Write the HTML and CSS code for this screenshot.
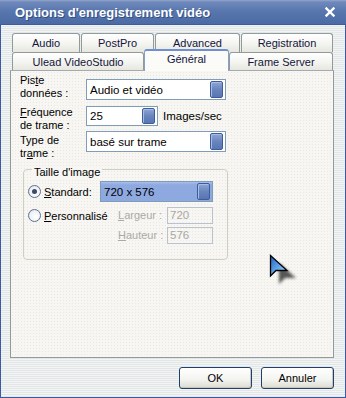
FILE: index.html
```html
<!DOCTYPE html>
<html lang="fr">
<head>
    <meta charset="UTF-8">
    <meta name="viewport" content="width=device-width, initial-scale=1.0">
    <title>Options d'enregistrement vidéo</title>
    <link rel="stylesheet" href="styles.css">
</head>
<body>
    <div class="window">
        <div class="titlebar">
            <span class="title">Options d'enregistrement vidéo</span>
            <svg class="close" width="10" height="10" viewBox="0 0 10 10">
                <path d="M1.5 1.5 L8.5 8.5 M8.5 1.5 L1.5 8.5" stroke="#fff" stroke-width="2.4" stroke-linecap="square"/>
            </svg>
        </div>
        <div class="body">
            <div class="tabrow tabrow-back">
                <div class="tab tab-audio">Audio</div>
                <div class="tab tab-postpro">PostPro</div>
                <div class="tab tab-advanced">Advanced</div>
                <div class="tab tab-registration">Registration</div>
            </div>
            <div class="tabrow tabrow-front">
                <div class="tab tab-ulead">Ulead VideoStudio</div>
                <div class="tab tab-general active">Général</div>
                <div class="tab tab-frame">Frame Server</div>
            </div>
            <div class="panel">
                <div class="field field-piste">
                    <div class="field-label">Pis<u>t</u>e<br>données :</div>
                    <div class="combo combo-wide"><span class="combo-text">Audio et vidéo</span><span class="drop"></span></div>
                </div>
                <div class="field field-freq">
                    <div class="field-label"><u>F</u>réquence<br>de trame :</div>
                    <div class="combo combo-short"><span class="combo-text">25</span><span class="drop"></span></div>
                    <span class="unit">Images/sec</span>
                </div>
                <div class="field field-type">
                    <div class="field-label">Type de<br>tr<u>a</u>me :</div>
                    <div class="combo combo-wide"><span class="combo-text">basé sur trame</span><span class="drop"></span></div>
                </div>

                <div class="group">
                    <div class="group-title">Taille d'image</div>
                    <div class="size-grid">
                        <div class="radio-item radio-std"><span class="radio checked"></span><span class="radio-text"><u>S</u>tandard:</span></div>
                        <div class="combo combo-size"><span class="combo-text">720 x 576</span><span class="drop"></span></div>

                        <div class="radio-item radio-custom"><span class="radio"></span><span class="radio-text"><u>P</u>ersonnalisé</span></div>
                        <span class="dim-label dim-w"><u>L</u>argeur :</span>
                        <span class="dim-box dim-w">720</span>

                        <span class="dim-label dim-h"><u>H</u>auteur :</span>
                        <span class="dim-box dim-h">576</span>
                    </div>
                </div>

                <svg class="cursor" width="34" height="36" viewBox="0 0 34 36">
                    <defs>
                        <filter id="blur" x="-50%" y="-50%" width="200%" height="200%">
                            <feGaussianBlur stdDeviation="1.8"/>
                        </filter>
                        <linearGradient id="arrowFill" x1="0" y1="0" x2="1" y2="1">
                            <stop offset="0" stop-color="#1d5fc4"/>
                            <stop offset="0.6" stop-color="#6fb0f0"/>
                            <stop offset="1" stop-color="#c4e4ff"/>
                        </linearGradient>
                    </defs>
                    <path d="M10 9 L10 30 L16 24 L27 24 Z" fill="#222" opacity="0.75" filter="url(#blur)"/>
                    <path d="M1.5 1.5 L1.5 22 L7 16.5 L18 16.5 Z" fill="url(#arrowFill)" stroke="#000" stroke-width="1.3" stroke-linejoin="miter"/>
                </svg>
            </div>
            <div class="buttons">
                <button class="btn">OK</button>
                <button class="btn">Annuler</button>
            </div>
        </div>
    </div>
</body>
</html>
```

FILE: styles.css
```css
html, body {
    margin: 0;
    padding: 0;
}
body {
    font-family: "Liberation Sans", Arial, sans-serif;
    font-size: 11px;
    color: #000;
    background: #fff;
}
u {
    text-decoration: underline;
    text-underline-offset: 1px;
}
.window {
    width: 346px;
    height: 398px;
    box-sizing: border-box;
    border: 1px solid #3c5ba6;
    border-top: none;
    display: flex;
    flex-direction: column;
}
.titlebar {
    height: 24px;
    margin: 0 -1px;
    display: flex;
    align-items: center;
    justify-content: space-between;
    padding: 0 11px 0 15px;
    background: linear-gradient(to bottom, #93a7cc 0, #7089bb 2px, #5877ae 45%, #4c6aa4 100%);
    border-bottom: 1px solid #3c5ba6;
}
.title {
    color: #fff;
    font-weight: bold;
    font-size: 13px;
    text-shadow: 1px 1px 0 rgba(20, 40, 90, 0.5);
}
.close {
    display: block;
}
.body {
    flex: 1;
    padding: 8px 11px 0 9px;
    background: repeating-linear-gradient(to bottom, #f4f4f0 0, #f4f4f0 1px, #e1e6ea 1px, #e1e6ea 2px);
    display: flex;
    flex-direction: column;
}
.tabrow {
    display: flex;
    margin-left: 2px;
}
.tabrow-back {
    height: 19px;
}
.tabrow-front {
    height: 18px;
}
.tab {
    box-sizing: border-box;
    border: 1px solid #919b9c;
    border-bottom: none;
    border-radius: 3px 3px 0 0;
    background: linear-gradient(to bottom, #ffffff 0, #f4f4f0 55%, #e7e7e0 100%);
    color: #14143c;
    text-align: center;
    padding-top: 3px;
    line-height: 13px;
    margin-right: 1px;
}
.tab-audio { width: 68px; }
.tab-postpro { width: 73px; }
.tab-advanced { width: 85px; }
.tab-registration { width: 92px; margin-right: 0; }
.tab-ulead { width: 132px; margin-right: 0; }
.tab-general { width: 85px; margin-right: 0; }
.tab-frame { width: 104px; margin-right: 0; }
.tab.active {
    position: relative;
    z-index: 1;
    margin-top: -3px;
    margin-bottom: -1px;
    padding-top: 2px;
    background: #fbfbf8;
    border-color: #8aa0c8;
    border-top: 2px solid #6f8fcf;
}
.panel {
    position: relative;
    width: 324px;
    height: 288px;
    box-sizing: border-box;
    border: 1px solid #919b9c;
    border-top-color: #a3aab0;
    background-color: #f7f6f2;
    background-image: radial-gradient(#e9e8e1 0.6px, transparent 0.8px);
    background-size: 3px 3px;
    padding: 3px 0 0 9px;
}
.field {
    display: flex;
    align-items: flex-start;
}
.field-label {
    width: 66px;
    line-height: 13px;
}
.field-piste .combo { margin-top: 5px; }
.field-freq .field-label { margin-top: 6px; }
.field-freq .combo { margin-top: 6px; }
.field-type .field-label { margin-top: 2px; }
.field-type .combo { margin-top: -1px; }
.combo {
    box-sizing: border-box;
    height: 21px;
    border: 1px solid #7f9db9;
    background: #fff;
    display: flex;
    align-items: center;
    justify-content: space-between;
    padding: 1px 2px 1px 3px;
}
.combo-wide { width: 140px; }
.combo-short { width: 72px; height: 20px; }
.combo-text {
    font-size: 11.5px;
}
.drop {
    width: 13px;
    height: 100%;
    box-sizing: border-box;
    border: 1px solid #3d5c9b;
    border-radius: 2px;
    background: linear-gradient(to bottom, #8ea6d4 0, #6985bd 50%, #5876b2 100%);
    box-shadow: inset 1px 1px 0 #a9bce2;
}
.unit {
    font-size: 11.5px;
    margin: 10px 0 0 5px;
}
.group {
    box-sizing: border-box;
    width: 205px;
    height: 91px;
    margin: 9px 0 0 3px;
    border: 1px solid #d0d0bf;
    border-radius: 4px;
    padding: 0 0 0 4px;
}
.group-title {
    width: max-content;
    margin: -4px 0 0 4px;
    padding: 0 2px;
    background: #f7f6f2;
    line-height: 13px;
}
.size-grid {
    display: grid;
    grid-template-columns: 72px 18px 49px 46px;
    grid-template-rows: 21px 22px 20px;
    margin-top: 2px;
}
.radio-item {
    display: flex;
    align-items: center;
    white-space: nowrap;
}
.radio-std {
    grid-column: 1;
    grid-row: 1;
}
.combo-size {
    grid-column: 2 / 5;
    grid-row: 1;
    width: 113px;
    background: linear-gradient(to bottom, #a9bee9 0, #8ea9e0 3px, #8ea9e0 100%);
}
.radio-custom {
    grid-column: 1 / 3;
    grid-row: 2;
    align-self: end;
    height: 17px;
}
.radio-text {
    margin-left: 3px;
    font-size: 11px;
}
.radio {
    flex-shrink: 0;
    box-sizing: border-box;
    width: 13px;
    height: 13px;
    border: 1px solid #5d7194;
    border-radius: 50%;
    background: radial-gradient(circle at 60% 60%, #ffffff 0, #eef0f4 60%, #d3d8e2 100%);
    display: flex;
    align-items: center;
    justify-content: center;
}
.radio.checked::after {
    content: "";
    width: 5px;
    height: 5px;
    border-radius: 50%;
    background: #3c4a66;
}
.dim-label {
    grid-column: 3;
    align-self: end;
    line-height: 17px;
    color: #acaaa4;
}
.dim-box {
    grid-column: 4;
    align-self: end;
    box-sizing: border-box;
    height: 17px;
    border: 1px solid #b9c3cf;
    color: #a8a8a4;
    font-size: 11.5px;
    line-height: 15px;
    padding-left: 2px;
}
.dim-w {
    grid-row: 2;
}
.dim-h {
    grid-row: 3;
}
.cursor {
    position: absolute;
    left: 258px;
    top: 183px;
}
.buttons {
    display: flex;
    justify-content: flex-end;
    gap: 9px;
    margin-top: 9px;
}
.btn {
    box-sizing: border-box;
    width: 73px;
    height: 22px;
    border: 1px solid #1f3f6e;
    border-radius: 3px;
    background: linear-gradient(to bottom, #ffffff 0, #f3f3ef 60%, #dcdad2 100%);
    font-family: "Liberation Sans", Arial, sans-serif;
    font-size: 11px;
    color: #000;
    padding: 0;
    box-shadow: inset -1px -1px 0 #c8c6bd;
}
```
